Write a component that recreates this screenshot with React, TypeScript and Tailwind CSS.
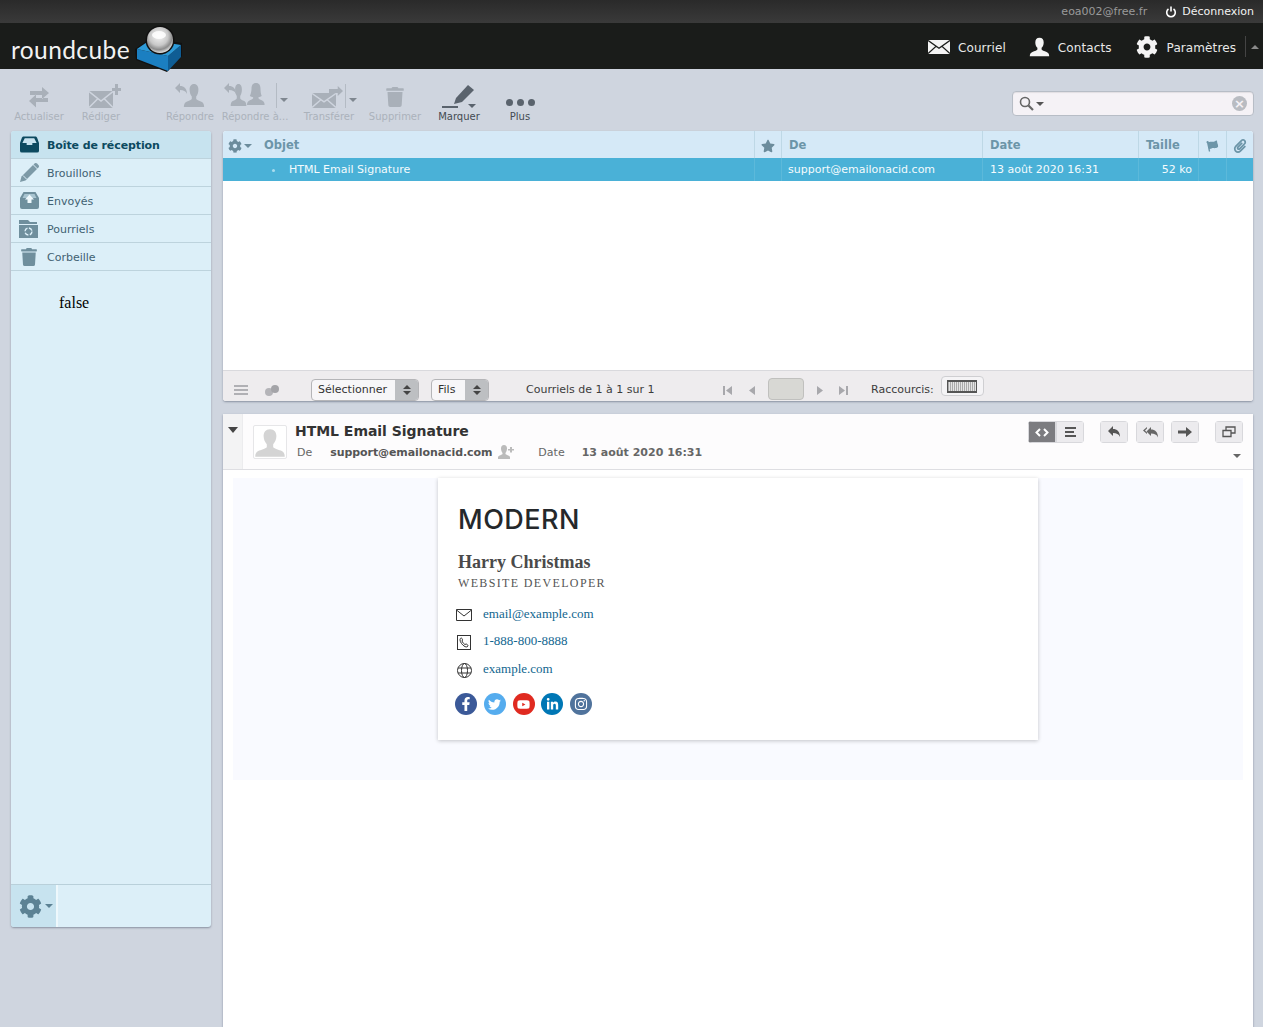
import React from "react";
import { FaFacebookF, FaTwitter, FaYoutube, FaLinkedinIn, FaInstagram, FaCog, FaTrash, FaPaperclip, FaStar, FaFlag } from "react-icons/fa";

const Env = ({ w = 24, h = 17, bg = "#a9b0b9", line = "#cfd5df" }: { w?: number; h?: number; bg?: string; line?: string }) => (
  <svg width={w} height={h} viewBox="0 0 24 17" preserveAspectRatio="none" className="block">
    <rect x="0" y="0" width="24" height="17" fill={bg} />
    <path d="M0 .5 12 10 24 .5M0 16.500 9 7.500M24 16.500 15 7.500" fill="none" stroke={line} strokeWidth="1.500" />
  </svg>
);

const Person = ({ c = "#a9b0b9", w = 26, h = 26 }: { c?: string; w?: number; h?: number }) => (
  <svg width={w} height={h} viewBox="0 0 26 26" preserveAspectRatio="none" className="block">
    <path d="M13 1c3.600 0 5.200 2.600 5.200 6 0 3-1.200 5.600-2.600 7v2.400c0 1 3.400 2 6.200 3.200 2.200 1 3.200 2.600 3.200 5.400H1c0-2.800 1-4.400 3.200-5.400 2.800-1.200 6.200-2.200 6.200-3.200V14C9 12.600 7.800 10 7.800 7c0-3.400 1.600-6 5.200-6z" fill={c} />
  </svg>
);

const Woman = ({ c = "#a9b0b9", w = 22, h = 23 }: { c?: string; w?: number; h?: number }) => (
  <svg width={w} height={h} viewBox="0 0 22 23" preserveAspectRatio="none" className="block">
    <path d="M11 0c4 0 5.500 2.500 5.500 6 0 3 .5 5.500 1.500 7.500-1 .8-2.500 1.200-4 1.300V16c0 .8 3 1.600 5 2.600 1.800 1 2.500 2.200 2.500 4.400H0c0-2.200.7-3.400 2.500-4.400 2-1 5-1.800 5-2.600v-1.200c-1.500-.1-3-.5-4-1.300C4.500 11.500 5.500 9 5.500 6 5.500 2.500 7 0 11 0z" fill={c} />
  </svg>
);

const ReplyArrow = ({ c = "#a9b0b9" }: { c?: string }) => (
  <svg width="12" height="12" viewBox="0 0 12 12" className="block">
    <path d="M5 0v3c4 0 7 2.400 7 8-1.200-3-3.500-4-7-4v3L0 5z" fill={c} />
  </svg>
);

const Caret = ({ c = "#7f8790" }: { c?: string }) => (
  <svg width="8" height="4" viewBox="0 0 8 4" className="block"><path d="M0 0h8L4 4z" fill={c} /></svg>
);

const font = "font-['DejaVu_Sans','Liberation_Sans',sans-serif]";

type TB = { label: string; w: string; ml: string; on?: boolean; children: React.ReactNode };
const ToolBtn = ({ label, w, ml, on, children }: TB) => (
  <div className={`flex flex-col items-center ${w} ${ml}`}>
    <div className="flex h-[28px] items-end justify-center">{children}</div>
    <span className={`mt-[1px] whitespace-nowrap text-[10px] leading-[14px] ${on ? "text-[#444b52]" : "text-[#abb2bb]"}`}>{label}</span>
  </div>
);

const Toolbar = () => (
  <div className="flex h-[62px] shrink-0 items-start pl-[10px] pr-[9px]">
    <div className="flex pt-[12px]">
      <ToolBtn label="Actualiser" w="w-[58px]" ml="ml-0">
        <svg width="24" height="21" viewBox="0 0 24 21" className="mb-[1px] block">
          <path d="M3 4h12V0l7 6-7 6V8H3zM21 11H9V7.500L2 14l7 6.500V15h12z" fill="#a9b0b9" />
        </svg>
      </ToolBtn>
      <ToolBtn label="Rédiger" w="w-[58px]" ml="ml-[4px]">
        <div className="relative mb-[1px] ml-[7px] h-[24px] w-[32px]">
          <div className="absolute bottom-0 left-0"><Env w={24} h={17} /></div>
          <span className="absolute right-0 top-0 h-[11px] w-[3px] translate-x-[-3px] bg-[#a9b0b9]" />
          <span className="absolute right-0 top-[4px] h-[3px] w-[9px] bg-[#a9b0b9]" />
        </div>
      </ToolBtn>
      <ToolBtn label="Répondre" w="w-[58px]" ml="ml-[31px]">
        <div className="relative mb-[1px] h-[25px] w-[30px]">
          <div className="absolute bottom-0 right-0"><Person w={22} h={25} /></div>
          <div className="absolute left-0 top-0"><ReplyArrow /></div>
        </div>
      </ToolBtn>
      <ToolBtn label="Répondre à..." w="w-[66px]" ml="ml-[3px]">
        <div className="ml-[2px] flex items-end">
          <div className="relative mb-[1px] flex h-[25px] w-[41px] justify-end">
            <div className="absolute left-0 top-0"><ReplyArrow /></div>
            <Person w={17} h={24} />
            <Woman w={18} h={22} />
          </div>
          <div className="mb-[1px] ml-[11px] flex h-[25px] items-end border-l border-[#b4bbc4] pb-[6px] pl-[3px]"><Caret /></div>
        </div>
      </ToolBtn>
      <ToolBtn label="Transférer" w="w-[58px]" ml="ml-[12px]">
        <div className="ml-[10px] flex items-end">
          <div className="relative mb-[1px] h-[24px] w-[31px]">
            <div className="absolute bottom-0 left-0"><Env w={24} h={15} /></div>
            <svg width="14" height="10" viewBox="0 0 16 10" preserveAspectRatio="none" className="absolute right-0 top-[2px] block"><path d="M0 3h10V0l6 5-6 5V7H0z" fill="#a9b0b9" /></svg>
          </div>
          <div className="mb-[1px] ml-[2px] flex h-[24px] items-end border-l border-[#b4bbc4] pb-[6px] pl-[3px]"><Caret /></div>
        </div>
      </ToolBtn>
      <ToolBtn label="Supprimer" w="w-[58px]" ml="ml-[8px]">
        <FaTrash className="mb-[2px] text-[#a9b0b9]" size={20} />
      </ToolBtn>
      <ToolBtn label="Marquer" w="w-[58px]" ml="ml-[6px]" on>
        <div className="relative mb-[1px] h-[25px] w-[34px]">
          <svg width="34" height="25" viewBox="0 0 34 25" className="block">
            <path d="M0 23h16v2H0z" fill="#5a636d" />
            <path d="M12 21l2-6L26 2l6 5-12 12z" fill="#5a636d" />
            <path d="M26 21h8l-4 4z" fill="#5a636d" />
          </svg>
        </div>
      </ToolBtn>
      <ToolBtn label="Plus" w="w-[58px]" ml="ml-[3px]" on>
        <div className="mb-[3px] flex gap-[4px]">
          <span className="h-[7px] w-[7px] rounded-full bg-[#5a636d]" />
          <span className="h-[7px] w-[7px] rounded-full bg-[#5a636d]" />
          <span className="h-[7px] w-[7px] rounded-full bg-[#5a636d]" />
        </div>
      </ToolBtn>
    </div>
    <div className="ml-auto mt-[22px] flex h-[25px] w-[242px] items-center rounded-[4px] border border-[#b7bdc6] bg-[#f5f2f6] pl-[6px] pr-[6px] shadow-[inset_0_1px_1px_rgba(0,0,0,0.08)]">
      <svg width="16" height="15" viewBox="0 0 16 15" className="block">
        <circle cx="6" cy="6" r="4.500" fill="none" stroke="#666" strokeWidth="1.600" />
        <path d="M9.500 9.500 14 14" stroke="#666" strokeWidth="2.200" />
      </svg>
      <div className="ml-[1px]"><Caret c="#555" /></div>
      <div className="ml-auto flex h-[15px] w-[15px] items-center justify-center rounded-full bg-[#b9bcc2] text-[13px] font-bold leading-none text-[#f5f2f6]">×</div>
    </div>
  </div>
);

const folderIcons: Record<string, React.ReactNode> = {
  inbox: (
    <svg width="19" height="17" viewBox="0 0 20 17" className="block">
      <path d="M4 0h12c1 0 1.500.5 2 1.500L20 7v8a2 2 0 0 1-2 2H2a2 2 0 0 1-2-2V7l2-5.500C2.500.5 3 0 4 0z" fill="#0c4a60" />
      <path d="M5 2h10l2.500 5H13v2H7V7H2.500z" fill="#c7e3ef" />
    </svg>
  ),
  drafts: (
    <svg width="19" height="19" viewBox="0 0 19 19" className="block">
      <path d="M0 19l1.500-5.500L13 2l4 4L5.500 17.500z" fill="#7d9aa7" />
      <path d="M14.500.5c.8-.7 1.800-.7 2.600.1l1.300 1.300c.8.800.8 1.800.1 2.600L17.500 5.500l-4-4z" fill="#7d9aa7" />
      <path d="M3 12.500l3.500 3.500" stroke="#dceff8" strokeWidth="1" />
    </svg>
  ),
  sent: (
    <svg width="19" height="17" viewBox="0 0 19 17" className="block">
      <path d="M3.500 0h12L19 6v9a2 2 0 0 1-2 2H2a2 2 0 0 1-2-2V6z" fill="#6f8f9d" />
      <path d="M4.500 2h10l2 4H2.500z" fill="#a9c5d1" />
      <path d="M9.500 2.500 14 7.500h-2.500V11h-4V7.500H5z" fill="#eef8fc" />
    </svg>
  ),
  junk: (
    <svg width="20" height="18" viewBox="0 0 20 18" className="block">
      <path d="M0 0h9l2 2h7v2H0z" fill="#6f8f9d" />
      <rect x="0" y="5" width="19" height="13" fill="#6f8f9d" />
      <circle cx="9.500" cy="11.500" r="3.500" fill="none" stroke="#dceff8" strokeWidth="1.400" strokeDasharray="4 1.500" />
    </svg>
  ),
  trash: <FaTrash className="text-[#6f8f9d]" size={18} />,
};

const Folder = ({ name, icon, active }: { name: string; icon: string; active?: boolean }) => (
  <div className={`flex h-[28px] items-center border-b border-[#bdd3dd] ${active ? "bg-[#c7e3ef] font-bold tracking-[-0.1px] text-[#0c4a60]" : "text-[#3f6172]"}`}>
    <div className="flex w-[36px] shrink-0 items-center justify-center">{folderIcons[icon]}</div>
    <span className="pt-[2px] text-[11px] leading-none">{name}</span>
  </div>
);

const Sidebar = () => (
  <div className="flex h-[796px] w-[200px] shrink-0 flex-col overflow-hidden rounded-[3px] bg-[#dceff8] shadow-[0_1px_2px_rgba(70,80,100,0.5)]">
    <Folder name="Boîte de réception" icon="inbox" active />
    <Folder name="Brouillons" icon="drafts" />
    <Folder name="Envoyés" icon="sent" />
    <Folder name="Pourriels" icon="junk" />
    <Folder name="Corbeille" icon="trash" />
    <div className="flex-1 pl-[48px] pt-[24px] font-['Liberation_Serif',serif] text-[16px] leading-[16px] text-black">false</div>
    <div className="flex h-[43px] shrink-0 border-t border-[#b9d0da]">
      <div className="flex w-[47px] items-center justify-center gap-[3px] border-r-2 border-[#eef8fc] bg-[#c7e3ef] pl-[5px]">
        <FaCog className="text-[#5c8294]" size={23} />
        <Caret c="#5c8294" />
      </div>
    </div>
  </div>
);

const headCell = "flex items-center border-r border-[#bed8e6] pt-[2px] text-[11.500px] font-bold text-[#6c95a8]";
const rowCell = "flex items-center border-r border-[#5cb9da] pt-[2px] text-[11px] text-[#f4fbfd]";
const cols = "grid grid-cols-[532px_27px_201px_156px_60px_28px_26px]";

const StepBtn = ({ children, w }: { children: React.ReactNode; w: string }) => (
  <div className={`flex h-[22px] overflow-hidden rounded-[4px] border border-[#b5b5b8] bg-[#f7f6f8] text-[11px] text-[#333] ${w}`}>
    <div className="flex flex-1 items-center pl-[6px]">{children}</div>
    <div className="flex w-[23px] flex-col items-center justify-center gap-[2px] bg-[#bdbfc2]">
      <span className="h-0 w-0 border-x-[4px] border-b-[4px] border-x-transparent border-b-[#444]" />
      <span className="h-0 w-0 border-x-[4px] border-t-[4px] border-x-transparent border-t-[#444]" />
    </div>
  </div>
);

const PageGlyph = ({ d }: { d: string }) => (
  <svg width="9" height="9" viewBox="0 0 9 9" className="block"><path d={d} fill="#a8a8ac" /></svg>
);

const MessageList = () => (
  <div className="flex h-[270px] shrink-0 flex-col overflow-hidden rounded-[3px] bg-white shadow-[0_1px_2px_rgba(70,80,100,0.5)]">
    <div className={`${cols} h-[27px] shrink-0 bg-[#d5e9f7]`}>
      <div className={`${headCell} pl-[5px]`}>
        <FaCog className="text-[#6c8c9c]" size={14} />
        <span className="ml-[2px]"><Caret c="#6c8c9c" /></span>
        <span className="ml-[12px]">Objet</span>
      </div>
      <div className={`${headCell} justify-center`}><FaStar className="text-[#6c8c9c]" size={14} /></div>
      <div className={`${headCell} pl-[7px]`}>De</div>
      <div className={`${headCell} pl-[7px]`}>Date</div>
      <div className={`${headCell} pl-[7px]`}>Taille</div>
      <div className={`${headCell} justify-center`}><FaFlag className="-rotate-12 text-[#6c95a8]" size={11} /></div>
      <div className="flex items-center justify-center pt-[2px]"><FaPaperclip className="text-[#6c95a8]" size={14} /></div>
    </div>
    <div className={`${cols} h-[23px] shrink-0 bg-[#4ab1d7]`}>
      <div className={`${rowCell} pl-[49px]`}>
        <span className="h-[3px] w-[3px] rounded-full bg-[#a9dcee]" />
        <span className="ml-[14px]">HTML Email Signature</span>
      </div>
      <div className={rowCell} />
      <div className={`${rowCell} pl-[6px]`}>support@emailonacid.com</div>
      <div className={`${rowCell} pl-[7px]`}>13 août 2020 16:31</div>
      <div className={`${rowCell} justify-end pr-[6px]`}>52 ko</div>
      <div className={rowCell} />
      <div />
    </div>
    <div className="flex-1 border-b border-[#d9d9dd]" />
    <div className="flex h-[30px] shrink-0 items-center bg-[#eeecee] pt-[8px] text-[11px] text-[#3c3c3c]">
      <div className="ml-[11px] flex w-[14px] flex-col gap-[2px]">
        <span className="h-[2px] bg-[#b0b0b4]" /><span className="h-[2px] bg-[#b0b0b4]" /><span className="h-[2px] bg-[#b0b0b4]" />
      </div>
      <svg width="16" height="11" viewBox="0 0 16 11" className="ml-[16px] block">
        <circle cx="5" cy="7" r="4" fill="#b4b4b8" /><circle cx="11" cy="4" r="4" fill="#a4a4a8" />
      </svg>
      <div className="ml-[31px]"><StepBtn w="w-[108px]">Sélectionner</StepBtn></div>
      <div className="ml-[12px]"><StepBtn w="w-[58px]">Fils</StepBtn></div>
      <span className="ml-[37px] w-[197px]">Courriels de 1 à 1 sur 1</span>
      <PageGlyph d="M0 0h2v9H0zM9 0v9L3 4.500z" />
      <span className="ml-[16px]"><PageGlyph d="M7 0v9L1 4.500z" /></span>
      <div className="ml-[11px] -mt-[3px] h-[22px] w-[36px] rounded-[4px] border border-[#c0c0be] bg-[#d8d8d4]" />
      <span className="ml-[11px]"><PageGlyph d="M2 0v9l6-4.500z" /></span>
      <span className="ml-[15px]"><PageGlyph d="M0 0v9l6-4.500zM7 0h2v9H7z" /></span>
      <span className="ml-[23px]">Raccourcis:</span>
      <div className="mb-[8px] ml-[7px] flex h-[20px] w-[43px] items-center justify-center rounded-[4px] border border-[#cfcfd2] bg-[#f5f4f6]">
        <div className="h-[13px] w-[30px] border-x border-y-2 border-[#555] bg-[repeating-linear-gradient(90deg,#aaa_0,#aaa_1px,#e4e4e4_1px,#e4e4e4_2px)]" />
      </div>
    </div>
  </div>
);

const SqBtn = ({ children, dark }: { children: React.ReactNode; dark?: boolean }) => (
  <div className={`flex h-[22px] w-[28px] items-center justify-center border border-[#d8d8dc] ${dark ? "border-[#7c7c80] bg-[#7c7c80]" : "bg-[#ecebee]"}`}>{children}</div>
);

const Icon = ({ children }: { children: React.ReactNode }) => (
  <div className="flex w-[18px] shrink-0 justify-center">{children}</div>
);

const Social = ({ bg, children }: { bg: string; children: React.ReactNode }) => (
  <div className={`flex h-[22px] w-[22px] items-center justify-center rounded-full text-white ${bg}`}>{children}</div>
);

const Preview = () => (
  <div className="mt-[13px] flex min-h-0 flex-1 flex-col bg-white shadow-[0_1px_2px_rgba(70,80,100,0.5)]">
    <div className="flex h-[56px] shrink-0 border-b border-[#dedee2] bg-[#fdfcfd]">
      <div className="flex w-[20px] shrink-0 justify-center border-r border-[#ececee] bg-[#f3f3f4] pt-[13px]">
        <svg width="10" height="6" viewBox="0 0 10 6" className="block"><path d="M0 0h10L5 6z" fill="#444" /></svg>
      </div>
      <div className="ml-[10px] mt-[11px] flex h-[34px] w-[34px] shrink-0 items-end justify-center overflow-hidden rounded-[2px] border border-[#e6e6e8] bg-white">
        <Person c="#d4d4d4" w={32} h={30} />
      </div>
      <div className="ml-[8px] flex flex-col">
        <div className="mt-[8px] text-[14px] font-bold leading-[18px] tracking-[-0.03px] text-[#333]">HTML Email Signature</div>
        <div className="mt-[5px] flex items-center text-[11px] leading-[14px] text-[#666]">
          <span className="ml-[2px]">De</span>
          <span className="ml-[18px] font-bold tracking-[-0.08px] text-[#555]">support@emailonacid.com</span>
          <svg width="17" height="14" viewBox="0 0 17 14" className="mb-[2px] ml-[6px] block">
            <path d="M6 0c2 0 3 1.500 3 3.500S8 7 7.500 8v1c0 .5 4 1.500 4.500 3v2H0v-2c.5-1.500 4.500-2.500 4.500-3V8C4 7 3 5.500 3 3.500S4 0 6 0z" fill="#bbb" />
            <path d="M12 2h2v2h2v1.500h-2v2h-2v-2h-2V4h2z" fill="#bbb" />
          </svg>
          <span className="ml-[23px]">Date</span>
          <span className="ml-[17px] font-bold text-[#666]">13 août 2020 16:31</span>
        </div>
      </div>
      <div className="ml-auto flex flex-col items-end pr-[10px] pt-[7px]">
        <div className="flex">
          <div className="flex overflow-hidden rounded-[4px]">
            <SqBtn dark>
              <svg width="14" height="9" viewBox="0 0 14 9" className="block"><path d="M5 1 1.500 4.500 5 8M9 1l3.500 3.500L9 8" fill="none" stroke="#fff" strokeWidth="2" /></svg>
            </SqBtn>
            <SqBtn>
              <div className="flex w-[11px] flex-col gap-[2px]">
                <span className="h-[2px] bg-[#555]" /><span className="h-[2px] w-[9px] bg-[#555]" /><span className="h-[2px] bg-[#555]" />
              </div>
            </SqBtn>
          </div>
          <div className="ml-[16px] overflow-hidden rounded-[4px]"><SqBtn><ReplyArrow c="#555" /></SqBtn></div>
          <div className="ml-[8px] overflow-hidden rounded-[4px]">
            <SqBtn>
              <svg width="15" height="11" viewBox="0 0 15 11" className="block"><path d="M4 0 0 3.500 4 7V5.500L2 3.500 4 1.500z" fill="#666" /><path d="M8 0v2.500c4 0 7 2.400 7 8-1.200-3-3.500-4-7-4V9L3.500 4.500z" fill="#666" /></svg>
            </SqBtn>
          </div>
          <div className="ml-[7px] overflow-hidden rounded-[4px]">
            <SqBtn>
              <svg width="14" height="10" viewBox="0 0 14 10" className="block"><path d="M0 3.500h8V0l6 5-6 5V6.500H0z" fill="#555" /></svg>
            </SqBtn>
          </div>
          <div className="ml-[16px] overflow-hidden rounded-[4px]">
            <SqBtn>
              <svg width="14" height="12" viewBox="0 0 14 12" className="block">
                <path d="M4 4V1h9v6h-4M1 4.500h8v6H1z" fill="none" stroke="#555" strokeWidth="1.300" />
              </svg>
            </SqBtn>
          </div>
        </div>
        <div className="mr-[2px] mt-[11px]"><Caret c="#666" /></div>
      </div>
    </div>
    <div className="mx-[10px] mt-[8px] flex h-[302px] shrink-0 justify-center bg-[#f9faff]">
      <div className="h-[262px] w-[600px] bg-white px-[20px] pt-[25px] font-['Liberation_Serif',serif] shadow-[0_1px_4px_rgba(0,0,0,0.22)]">
        <div className="font-['Inter',sans-serif] text-[27px] font-medium leading-[34px] tracking-[0.5px] text-[#25282b]">MODERN</div>
        <div className="mt-[15px] text-[18px] font-bold leading-[21px] text-[#4a4a4a]">Harry Christmas</div>
        <div className="mt-[2px] text-[12px] leading-[16px] tracking-[1.350px] text-[#555]">WEBSITE DEVELOPER</div>
        <div className="-ml-[3px] mt-[10px] flex flex-col text-[13px] leading-[16px] text-[#11668f]">
          <div className="flex h-[27px] items-center">
            <Icon>
              <svg width="16" height="12" viewBox="0 0 16 12" className="mt-[1px] block"><path d="M.5.500h15v11H.5zM.5 1 8 7l7.500-6" fill="none" stroke="#333" strokeWidth="1" /></svg>
            </Icon>
            <span className="-mt-[2px] ml-[10px]">email@example.com</span>
          </div>
          <div className="flex h-[27px] items-center">
            <Icon>
              <svg width="14" height="15" viewBox="0 0 14 15" className="mt-[1px] block"><rect x=".5" y=".5" width="13" height="14" fill="none" stroke="#333" /><path d="M4 3c1 0 1.500 1 1.500 2L5 6c.5 1.500 2 3 3 3.500l1-.5c1 0 2 1 2 2-1 1.500-2.500 1-4 0S3 7 3 5c0-1 .5-2 1-2z" fill="none" stroke="#333" /></svg>
            </Icon>
            <span className="-mt-[2px] ml-[10px]">1-888-800-8888</span>
          </div>
          <div className="flex h-[29px] items-center">
            <Icon>
              <svg width="15" height="15" viewBox="0 0 15 15" className="mt-[1px] block"><g fill="none" stroke="#333"><circle cx="7.500" cy="7.500" r="7" /><ellipse cx="7.500" cy="7.500" rx="3" ry="7" /><path d="M1 5h13M1 10h13" /></g></svg>
            </Icon>
            <span className="-mt-[2px] ml-[10px]">example.com</span>
          </div>
        </div>
        <div className="-ml-[3px] mt-[9px] flex gap-[6.750px]">
          <Social bg="bg-[#3b5998]"><FaFacebookF size={14} /></Social>
          <Social bg="bg-[#55acee]"><FaTwitter size={13} /></Social>
          <Social bg="bg-[#e02a20]"><FaYoutube size={13} /></Social>
          <Social bg="bg-[#0077b5]"><FaLinkedinIn size={13} /></Social>
          <Social bg="bg-[#50739c]"><FaInstagram size={14} /></Social>
        </div>
      </div>
    </div>
  </div>
);

const Logo = () => (
  <div className="flex items-start">
    <span className="ml-[11px] mt-[11px] font-['Lato',sans-serif] text-[24.500px] font-normal leading-[32px] tracking-[0.400px] text-[#f2f2f2]">roundcube</span>
    <svg width="50" height="48" viewBox="0 0 50 48" className="relative z-10 ml-[5px] mt-[2px] block">
      <defs>
        <radialGradient id="ball" cx="45%" cy="35%" r="65%">
          <stop offset="0%" stopColor="#f4f4f4" /><stop offset="55%" stopColor="#c9c9c9" /><stop offset="80%" stopColor="#8c8c8c" /><stop offset="100%" stopColor="#e2e2e2" />
        </radialGradient>
      </defs>
      <path d="M0 24 16 13l31 5v13L32 47 1 35z" fill="#111" />
      <path d="M2 24 33 31v15L2 34z" fill="#1b7fc1" />
      <path d="M33 31 46 20v12L33 46z" fill="#0f5d94" />
      <path d="M2 24 15 15l31 5-13 11z" fill="#2c9ad8" />
      <circle cx="25" cy="15" r="14.500" fill="#111" />
      <circle cx="25" cy="15" r="13" fill="url(#ball)" />
      <ellipse cx="24" cy="10" rx="7" ry="4" fill="#fff" opacity=".85" />
    </svg>
  </div>
);

const NavItem = ({ icon, label, ml }: { icon: React.ReactNode; label: string; ml: string }) => (
  <div className={`flex items-center ${ml}`}>
    {icon}
    <span className="pt-[3px] text-[12px] tracking-[0.1px] text-[#e8e8e8]">{label}</span>
  </div>
);

export default function App() {
  return (
    <div className={`flex h-[1027px] w-full flex-col overflow-hidden bg-[#cfd5df] ${font}`}>
      <div className="flex h-[23px] shrink-0 items-center justify-end bg-gradient-to-b from-[#2a2a2a] to-[#3a3a3a] pr-[9px] pt-[1px] text-[11px]">
        <span className="text-[#9a9a9a]">eoa002@free.fr</span>
        <svg width="12" height="12" viewBox="0 0 12 12" className="ml-[18px] block">
          <path d="M3.500 3a4.300 4.300 0 1 0 5 0" fill="none" stroke="#fff" strokeWidth="1.600" />
          <path d="M6 .5v5" stroke="#fff" strokeWidth="1.600" />
        </svg>
        <span className="ml-[5px] text-[#f2f2f2]">Déconnexion</span>
      </div>
      <div className="flex h-[46px] shrink-0 items-start bg-[#1a1c1a]">
        <Logo />
        <div className="ml-auto flex h-[46px] items-center pt-[1px]">
          <NavItem
            ml=""
            label="Courriel"
            icon={<div className="mr-[8px]"><Env w={22} h={14} bg="#f4f4f4" line="#1a1c1a" /></div>}
          />
          <NavItem
            ml="ml-[23px]"
            label="Contacts"
            icon={<div className="mr-[8px]"><Person c="#f4f4f4" w={21} h={20} /></div>}
          />
          <NavItem
            ml="ml-[24px]"
            label="Paramètres"
            icon={<FaCog className="mr-[9px] text-[#f4f4f4]" size={22} />}
          />
          <div className="ml-[9px] flex h-[21px] w-[18px] items-center justify-center border-l border-[#444]">
            <svg width="8" height="4" viewBox="0 0 8 4" className="block"><path d="M0 4h8L4 0z" fill="#8a8a8a" /></svg>
          </div>
        </div>
      </div>
      <Toolbar />
      <div className="flex min-h-0 flex-1 pl-[11px] pr-[10px]">
        <Sidebar />
        <div className="ml-[12px] flex min-w-0 flex-1 flex-col">
          <MessageList />
          <Preview />
        </div>
      </div>
    </div>
  );
}
